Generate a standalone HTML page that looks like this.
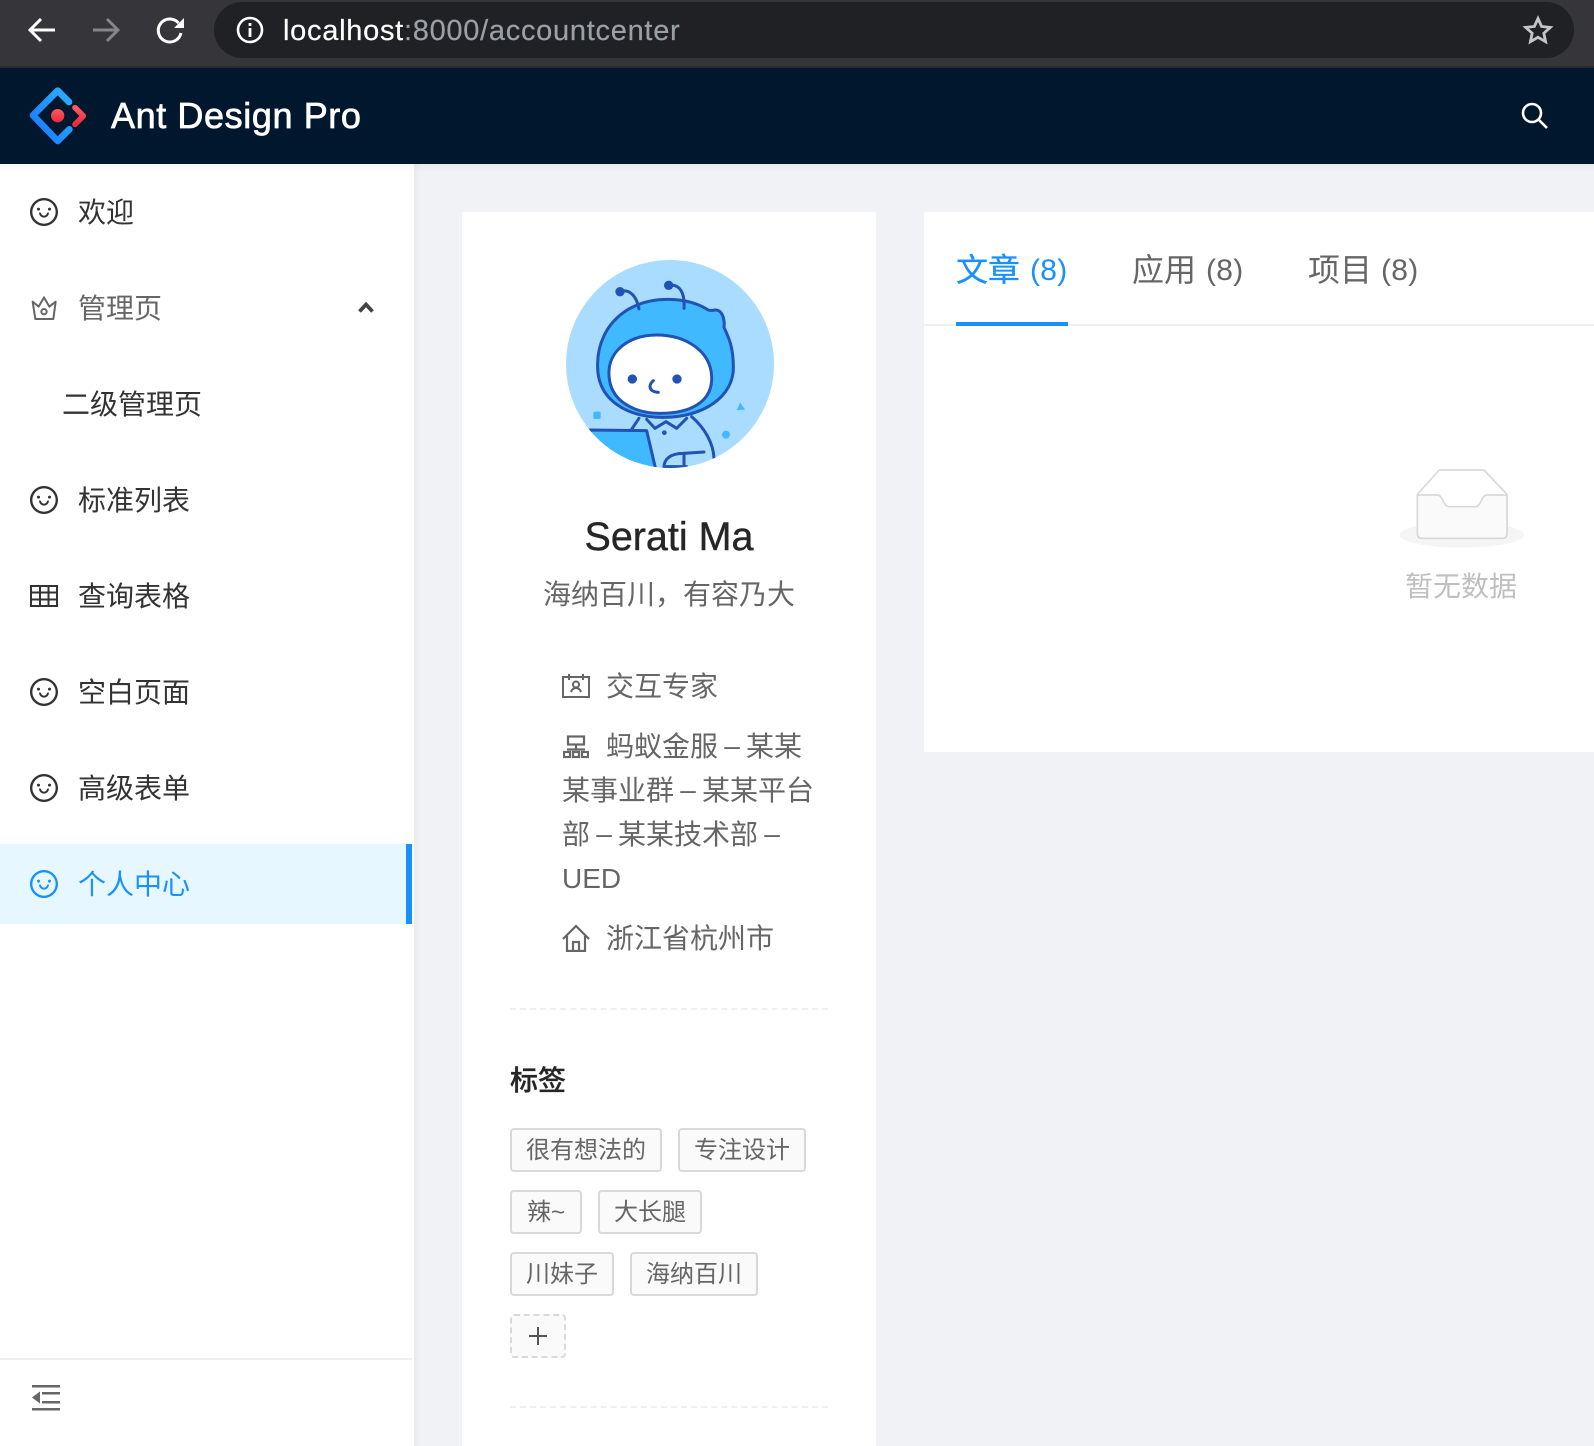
<!DOCTYPE html>
<html lang="zh-CN">
<head>
<meta charset="utf-8">
<title>Ant Design Pro</title>
<style>
html,body{margin:0;padding:0;width:1594px;height:1446px;overflow:hidden;background:#f0f2f5}
body{position:relative;font-family:"Liberation Sans","Noto Sans CJK SC",sans-serif}
.a{position:absolute}
.t{position:absolute;white-space:nowrap;line-height:44px;height:44px}
svg{position:absolute;display:block}
.m{font-size:28px;color:#333;left:78px}
.g{font-size:28px;color:#666}
.d{display:inline-block;width:28px;text-align:center;position:relative;top:-1px}
.tag{position:absolute;box-sizing:border-box;height:44px;border:2px solid #d9d9d9;background:#fafafa;border-radius:4px;font-size:24px;line-height:42px;color:#666;text-align:center;white-space:nowrap}
.dash{position:absolute;left:510px;width:318px;height:0;border-top:2px dashed #efefef}
</style>
</head>
<body>
<!-- browser bar -->
<div class="a" style="left:0;top:0;width:1594px;height:66px;background:#36353a"></div>
<div class="a" style="left:0;top:66px;width:1594px;height:2px;background:#2a2a2e"></div>
<div class="a" style="left:214px;top:2px;width:1360px;height:56px;background:#202124;border-radius:28px"></div>
<svg style="left:26px;top:14px" width="32" height="32" viewBox="0 0 32 32" fill="none" stroke="#fff" stroke-width="3"><path d="M29 16H5M15 5L4 16l11 11"/></svg>
<svg style="left:90px;top:14px" width="32" height="32" viewBox="0 0 32 32" fill="none" stroke="#85868a" stroke-width="3"><path d="M3 16h24M17 5l11 11-11 11"/></svg>
<svg style="left:154px;top:14px" width="32" height="32" viewBox="0 0 32 32" fill="none"><path d="M24.500 9A11.500 11.500 0 1 0 27 19" stroke="#fff" stroke-width="3"/><path d="M30 4v10H20z" fill="#fff"/></svg>
<svg style="left:235px;top:15px" width="30" height="30" viewBox="0 0 30 30" fill="none"><circle cx="15" cy="15" r="12" stroke="#fff" stroke-width="2.600"/><rect x="13.600" y="13" width="2.800" height="9" fill="#fff"/><rect x="13.600" y="8" width="2.800" height="3" fill="#fff"/></svg>
<div class="t" style="left:283px;top:9px;font-size:29px;color:#9aa0a6;letter-spacing:.72px;-webkit-text-stroke:.2px"><span style="color:#fff">localhost</span>:8000/accountcenter</div>
<svg style="left:1522px;top:15px" width="32" height="30" viewBox="0 0 32 30" fill="none"><path d="M16 3.500l3.600 8 8.700.9-6.500 5.800 1.800 8.500-7.600-4.400-7.600 4.400 1.800-8.500-6.500-5.800 8.700-.9z" stroke="#c4c5c7" stroke-width="2.800"/></svg>

<!-- header -->
<div class="a" style="left:0;top:68px;width:1594px;height:96px;background:#00172d"></div>
<svg style="left:10px;top:70px" width="90" height="90" viewBox="0 0 270 270" fill="none">
<defs><linearGradient id="lg" x1="0" y1="1" x2="1" y2="0"><stop offset="0" stop-color="#1677ff"/><stop offset="1" stop-color="#2ab0ff"/></linearGradient>
<linearGradient id="lr" x1="0" y1="0" x2="0" y2="1"><stop offset="0" stop-color="#fa5a5f"/><stop offset="1" stop-color="#e8293f"/></linearGradient></defs>
<path d="M177 96L143 62 69 136l74 77 35-35" stroke="url(#lg)" stroke-width="20" stroke-linecap="round" stroke-linejoin="round"/>
<path d="M195 113l25 25-25 25" stroke="url(#lr)" stroke-width="17" stroke-linecap="round" stroke-linejoin="round"/>
<circle cx="143" cy="137" r="20" fill="url(#lr)"/>
</svg>
<div class="t" style="left:111px;top:94px;font-size:36px;color:#fff;-webkit-text-stroke:.7px #fff;letter-spacing:.6px">Ant Design Pro</div>
<svg style="left:1520px;top:101px" width="30" height="30" viewBox="0 0 30 30" fill="none" stroke="#fff" stroke-width="2.600"><circle cx="12" cy="12" r="9"/><path d="M18.500 18.500l8.500 8.500"/></svg>

<!-- sidebar -->
<div class="a" style="left:0;top:164px;width:414px;height:1282px;background:#fff"></div>
<div class="a" style="left:414px;top:164px;width:8px;height:1282px;background:linear-gradient(90deg,#eaebef,#f0f2f5)"></div>
<div class="a" style="left:0;top:164px;width:1594px;height:8px;background:linear-gradient(180deg,rgba(0,0,0,.035),rgba(0,0,0,0))"></div>
<div class="a" style="left:0;top:844px;width:412px;height:80px;background:#e6f7ff"></div>
<div class="a" style="left:406px;top:844px;width:6px;height:80px;background:#1890ff"></div>
<div class="a" style="left:0;top:1358px;width:412px;height:2px;background:#f0f0f0"></div>

<svg width="0" height="0" style="position:absolute"><defs><path id="s" d="M288 421a48 48 0 1 0 96 0 48 48 0 1 0-96 0zm352 0a48 48 0 1 0 96 0 48 48 0 1 0-96 0zM512 64C264.600 64 64 264.600 64 512s200.600 448 448 448 448-200.600 448-448S759.400 64 512 64zm263 711c-34.200 34.200-74 61-118.300 79.800C611 874.200 562.300 884 512 884c-50.300 0-99-9.800-144.800-29.200A370.400 370.400 0 0 1 248.900 775c-34.200-34.200-61-74-79.800-118.300C149.800 611 140 562.300 140 512s9.800-99 29.200-144.800A370.400 370.400 0 0 1 249 248.900c34.200-34.200 74-61 118.300-79.800C413 149.800 461.700 140 512 140c50.300 0 99 9.800 144.800 29.200A370.400 370.400 0 0 1 775.100 249c34.200 34.200 61 74 79.800 118.300C874.200 413 884 461.700 884 512s-9.800 99-29.200 144.800A368.890 368.890 0 0 1 775 775zM664 533h-48.100c-4.200 0-7.800 3.200-8.100 7.400C604 589.900 562.500 629 512 629s-92.100-39.100-95.800-88.600c-.3-4.200-3.900-7.400-8.100-7.400H360a8 8 0 0 0-8 8.400c4.400 84.300 74.500 151.600 160 151.600s155.600-67.300 160-151.600a8 8 0 0 0-8-8.400z"/></defs></svg>

<svg style="left:28px;top:196px" width="32" height="32" viewBox="0 0 1024 1024" fill="#333"><use href="#s"/></svg>
<div class="t m" style="top:191px">欢迎</div>

<svg style="left:20px;top:280px" width="60" height="60" viewBox="0 0 180 180" fill="none" stroke="#666" stroke-width="6" stroke-linejoin="round"><path d="M38 65l8 52h54l7-52-19 15-16-28-16 28z"/><circle cx="72" cy="95" r="8"/></svg>
<div class="t g" style="left:78px;top:287px">管理页</div>
<svg style="left:356px;top:299px" width="20" height="16" viewBox="0 0 20 16" fill="none" stroke="#444" stroke-width="3.800"><path d="M3.500 12.500L10 5.500l6.500 7"/></svg>

<div class="t m" style="left:62px;top:383px">二级管理页</div>

<svg style="left:28px;top:484px" width="32" height="32" viewBox="0 0 1024 1024" fill="#333"><use href="#s"/></svg>
<div class="t m" style="top:479px">标准列表</div>

<svg style="left:30px;top:585px" width="28" height="22" viewBox="0 0 28 22" fill="none" stroke="#333" stroke-width="2"><rect x="1" y="1" width="26" height="20"/><path d="M1 7.500h26M1 14.500h26M10 1v20M18.500 1v20"/></svg>
<div class="t m" style="top:575px">查询表格</div>

<svg style="left:28px;top:676px" width="32" height="32" viewBox="0 0 1024 1024" fill="#333"><use href="#s"/></svg>
<div class="t m" style="top:671px">空白页面</div>

<svg style="left:28px;top:772px" width="32" height="32" viewBox="0 0 1024 1024" fill="#333"><use href="#s"/></svg>
<div class="t m" style="top:767px">高级表单</div>

<svg style="left:28px;top:868px" width="32" height="32" viewBox="0 0 1024 1024" fill="#1890ff"><use href="#s"/></svg>
<div class="t m" style="top:863px;color:#1890ff">个人中心</div>

<svg style="left:32px;top:1384px" width="28" height="28" viewBox="0 0 28 28" fill="#666"><rect y="1" width="28" height="2.500"/><rect x="10" y="8" width="18" height="2.500"/><rect x="10" y="17" width="18" height="2.500"/><rect y="24" width="28" height="2.500"/><path d="M0 13.500L8 7.500v12z"/></svg>

<!-- left card -->
<div class="a" style="left:462px;top:212px;width:414px;height:1234px;background:#fff;border-radius:2px 2px 0 0"></div>
<svg style="left:540px;top:240px" width="260" height="240" viewBox="0 0 780 720" fill="none">
<defs><clipPath id="c"><circle cx="390" cy="372" r="312"/></clipPath></defs>
<g clip-path="url(#c)">
<rect width="780" height="720" fill="#a9dcff"/>
<g stroke="#2152b5" stroke-width="9" stroke-linecap="round" stroke-linejoin="round">
<path d="M297 535L272 572M455 530C495 565 520 610 522 655M320 538L345 565 378 545 410 565 440 535"/>
<path d="M150 570L320 572 350 700H150Z" fill="#40b9ff"/>
<path d="M372 690C368 655 395 640 430 640L492 636M432 640V690M372 680H440"/>
<path d="M500 207C440 172 340 165 265 208 195 250 170 320 173 385 176 480 260 532 370 532 490 532 582 470 580 380 580 320 565 290 552 262 555 235 545 208 525 210 515 212 505 212 500 207Z" fill="#40b9ff"/>
<path d="M350 285C265 285 203 335 207 405 210 485 285 520 360 520 445 520 518 490 515 410 512 335 440 285 350 285Z" fill="#fff"/>
<path d="M297 207C290 170 270 145 240 155M432 205C435 160 420 130 386 136" fill="none"/>
<path d="M340 422C325 435 325 455 355 457" fill="none"/>
</g>
<g fill="#2152b5"><circle cx="240" cy="155" r="14"/><circle cx="386" cy="136" r="14"/><circle cx="277" cy="417" r="14"/><circle cx="411" cy="417" r="14"/><circle cx="373" cy="578" r="7"/></g>
<g fill="#40b9ff"><rect x="160" y="515" width="22" height="22" rx="5"/><circle cx="558" cy="584" r="12"/><path d="M600 488L615 508 590 511Z"/></g>
</g>
</svg>

<div class="t" style="left:462px;width:414px;text-align:center;top:515px;font-size:39.500px;color:#262626;-webkit-text-stroke:.4px #262626">Serati Ma</div>
<div class="t g" style="left:462px;width:414px;text-align:center;top:573px">海纳百川，有容乃大</div>

<svg style="left:562px;top:674px" width="28" height="24" viewBox="0 0 28 24" fill="none" stroke="#666" stroke-width="2"><rect x="1" y="3" width="26" height="20"/><path d="M7 0v6M21 0v6"/><circle cx="14" cy="10.500" r="3"/><path d="M9 18c1-3 3-4 5-4s4 1 5 4"/></svg>
<div class="t g" style="left:606px;top:665px">交互专家</div>

<svg style="left:563px;top:735px" width="26" height="24" viewBox="0 0 26 24" fill="none" stroke="#666" stroke-width="2.200"><rect x="5" y="1.500" width="16" height="8"/><path d="M13 9.500v5"/><rect x="1" y="17" width="6" height="5"/><rect x="10" y="17" width="6" height="5"/><rect x="19" y="17" width="6" height="5"/><path d="M4 14.500h18"/></svg>
<div class="t g" style="left:606px;top:725px">蚂蚁金服<span class="d">–</span>某某</div>
<div class="t g" style="left:562px;top:769px">某事业群<span class="d">–</span>某某平台</div>
<div class="t g" style="left:562px;top:813px">部<span class="d">–</span>某某技术部<span class="d">–</span></div>
<div class="t g" style="left:562px;top:857px">UED</div>

<svg style="left:562px;top:924px" width="28" height="28" viewBox="0 0 28 28" fill="none" stroke="#666" stroke-width="2.200"><path d="M1 15L14 2l13 13M5 12v15h18V12M11 27v-9h6v9"/></svg>
<div class="t g" style="left:606px;top:917px">浙江省杭州市</div>

<div class="dash" style="top:1008px"></div>
<div class="t" style="left:510px;top:1059px;font-size:28px;color:#262626;font-weight:500;-webkit-text-stroke:.3px #262626">标签</div>

<div class="tag" style="left:510px;top:1128px;width:152px">很有想法的</div>
<div class="tag" style="left:678px;top:1128px;width:128px">专注设计</div>
<div class="tag" style="left:510px;top:1190px;width:72px">辣~</div>
<div class="tag" style="left:598px;top:1190px;width:104px">大长腿</div>
<div class="tag" style="left:510px;top:1252px;width:104px">川妹子</div>
<div class="tag" style="left:630px;top:1252px;width:128px">海纳百川</div>
<div class="tag" style="left:510px;top:1314px;width:56px;border-style:dashed"></div>
<svg style="left:528px;top:1326px" width="20" height="20" viewBox="0 0 20 20" stroke="#555" stroke-width="2"><path d="M10 1v18M1 10h18"/></svg>
<div class="dash" style="top:1406px"></div>

<!-- right card -->
<div class="a" style="left:924px;top:212px;width:670px;height:540px;background:#fff;border-radius:2px 0 0 2px"></div>
<div class="a" style="left:924px;top:324px;width:670px;height:2px;background:#f0f0f0"></div>
<div class="a" style="left:956px;top:322px;width:112px;height:4px;background:#1890ff"></div>
<div class="t" style="left:956px;top:248px;font-size:32px;color:#1890ff;-webkit-text-stroke:.3px #1890ff">文章</div>
<div class="t" style="left:1030px;top:249px;font-size:30px;color:#1890ff;letter-spacing:.3px">(8)</div>
<div class="t" style="left:1132px;top:248px;font-size:32px;color:#666">应用</div>
<div class="t" style="left:1206px;top:249px;font-size:30px;color:#666;letter-spacing:.3px">(8)</div>
<div class="t" style="left:1308px;top:248px;font-size:32px;color:#666">项目</div>
<div class="t" style="left:1381px;top:249px;font-size:30px;color:#666;letter-spacing:.3px">(8)</div>

<svg style="left:1360px;top:440px" width="234" height="120" viewBox="0 0 702 360" fill="none">
<ellipse cx="306" cy="285" rx="187" ry="38" fill="#f5f5f5"/>
<path d="M172 163L238 90H372L441 163V280Q441 295 426 295H187Q172 295 172 280Z" stroke="#d9d9d9" stroke-width="5" fill="#fff" stroke-linejoin="round"/>
<path d="M172 165H232C250 165 248 200 268 200H345C365 200 362 165 382 165H441V280Q441 295 426 295H187Q172 295 172 280Z" fill="#fafafa" stroke="#d9d9d9" stroke-width="5" stroke-linejoin="round"/>
</svg>
<div class="t" style="left:1405px;top:565px;font-size:28px;color:#bfbfbf">暂无数据</div>
</body>
</html>
